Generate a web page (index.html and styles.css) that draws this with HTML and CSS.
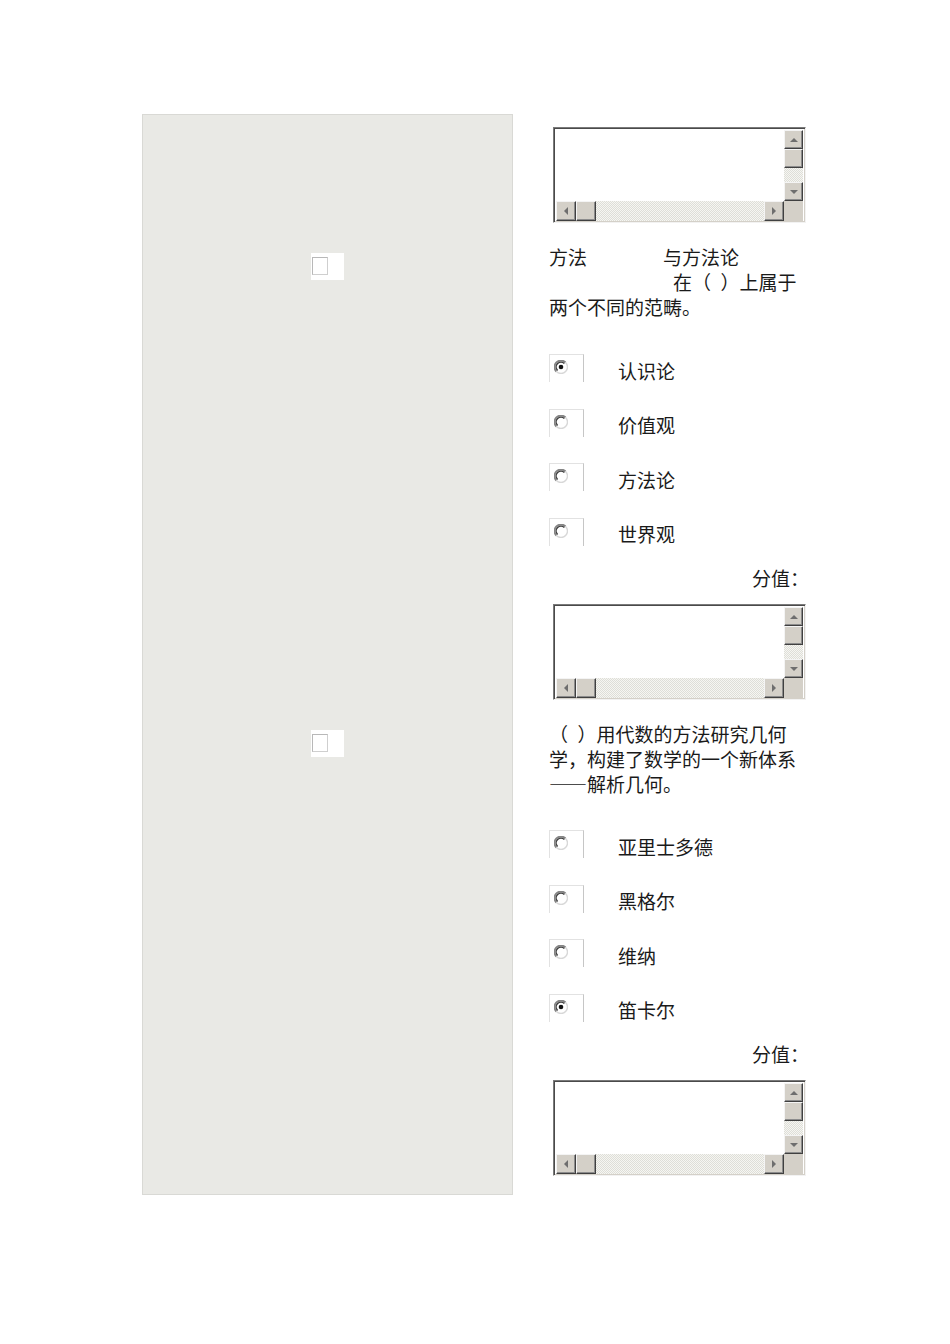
FILE: index.html
```html
<!DOCTYPE html>
<html lang="zh-CN">
<head>
<meta charset="utf-8">
<title>题目</title>
<link rel="stylesheet" href="styles.css">
</head>
<body>
<div class="page">
  <div class="side">
    <div class="check first"><span class="check-inner"></span></div>
    <div class="check second"><span class="check-inner"></span></div>
  </div>
  <div class="main">
    <div class="ta first-ta">
      <div class="ta-body"></div>
      <div class="vbar"><span class="btn up"><i class="arr a-up"></i></span><span class="btn thumb"></span><span class="track"></span><span class="btn down"><i class="arr a-down"></i></span></div>
      <div class="hbar"><span class="btn left"><i class="arr a-left"></i></span><span class="btn thumb"></span><span class="track"></span><span class="btn right"><i class="arr a-right"></i></span></div>
      <div class="corner"></div>
    </div>

    <div class="q">
      <div>方法<span class="gap1"></span>与方法论</div>
      <div><span class="gap2"></span>在（&#8194;）上属于</div>
      <div>两个不同的范畴。</div>
    </div>

    <div class="opts">
      <div class="opt"><span class="rbox"><svg class="radio" viewBox="0 0 14 14" width="14" height="14"><circle cx="7" cy="7" r="6" fill="#fff"/><path d="M2.4 11.6 A6.3 6.3 0 0 1 11.6 2.4" stroke="#858585" stroke-width="1.8" fill="none"/><path d="M11.6 2.4 A6.3 6.3 0 0 1 2.4 11.6" stroke="#d8d8d8" stroke-width="1.4" fill="none"/><path d="M3.6 10.4 A4.7 4.7 0 0 1 10.4 3.6" stroke="#404040" stroke-width="1.4" fill="none"/><circle cx="7" cy="7" r="2.3" fill="#111"/></svg></span><span class="label">认识论</span></div>
      <div class="opt"><span class="rbox"><svg class="radio" viewBox="0 0 14 14" width="14" height="14"><circle cx="7" cy="7" r="6" fill="#fff"/><path d="M2.4 11.6 A6.3 6.3 0 0 1 11.6 2.4" stroke="#858585" stroke-width="1.8" fill="none"/><path d="M11.6 2.4 A6.3 6.3 0 0 1 2.4 11.6" stroke="#d8d8d8" stroke-width="1.4" fill="none"/><path d="M3.6 10.4 A4.7 4.7 0 0 1 10.4 3.6" stroke="#404040" stroke-width="1.4" fill="none"/></svg></span><span class="label">价值观</span></div>
      <div class="opt"><span class="rbox"><svg class="radio" viewBox="0 0 14 14" width="14" height="14"><circle cx="7" cy="7" r="6" fill="#fff"/><path d="M2.4 11.6 A6.3 6.3 0 0 1 11.6 2.4" stroke="#858585" stroke-width="1.8" fill="none"/><path d="M11.6 2.4 A6.3 6.3 0 0 1 2.4 11.6" stroke="#d8d8d8" stroke-width="1.4" fill="none"/><path d="M3.6 10.4 A4.7 4.7 0 0 1 10.4 3.6" stroke="#404040" stroke-width="1.4" fill="none"/></svg></span><span class="label">方法论</span></div>
      <div class="opt"><span class="rbox"><svg class="radio" viewBox="0 0 14 14" width="14" height="14"><circle cx="7" cy="7" r="6" fill="#fff"/><path d="M2.4 11.6 A6.3 6.3 0 0 1 11.6 2.4" stroke="#858585" stroke-width="1.8" fill="none"/><path d="M11.6 2.4 A6.3 6.3 0 0 1 2.4 11.6" stroke="#d8d8d8" stroke-width="1.4" fill="none"/><path d="M3.6 10.4 A4.7 4.7 0 0 1 10.4 3.6" stroke="#404040" stroke-width="1.4" fill="none"/></svg></span><span class="label">世界观</span></div>
    </div>
    <div class="score">分值：</div>

    <div class="ta">
      <div class="ta-body"></div>
      <div class="vbar"><span class="btn up"><i class="arr a-up"></i></span><span class="btn thumb"></span><span class="track"></span><span class="btn down"><i class="arr a-down"></i></span></div>
      <div class="hbar"><span class="btn left"><i class="arr a-left"></i></span><span class="btn thumb"></span><span class="track"></span><span class="btn right"><i class="arr a-right"></i></span></div>
      <div class="corner"></div>
    </div>

    <div class="q q2">
      <div>（&#8194;）用代数的方法研究几何</div>
      <div>学，构建了数学的一个新体系</div>
      <div>——解析几何。</div>
    </div>

    <div class="opts opts2">
      <div class="opt"><span class="rbox"><svg class="radio" viewBox="0 0 14 14" width="14" height="14"><circle cx="7" cy="7" r="6" fill="#fff"/><path d="M2.4 11.6 A6.3 6.3 0 0 1 11.6 2.4" stroke="#858585" stroke-width="1.8" fill="none"/><path d="M11.6 2.4 A6.3 6.3 0 0 1 2.4 11.6" stroke="#d8d8d8" stroke-width="1.4" fill="none"/><path d="M3.6 10.4 A4.7 4.7 0 0 1 10.4 3.6" stroke="#404040" stroke-width="1.4" fill="none"/></svg></span><span class="label">亚里士多德</span></div>
      <div class="opt"><span class="rbox"><svg class="radio" viewBox="0 0 14 14" width="14" height="14"><circle cx="7" cy="7" r="6" fill="#fff"/><path d="M2.4 11.6 A6.3 6.3 0 0 1 11.6 2.4" stroke="#858585" stroke-width="1.8" fill="none"/><path d="M11.6 2.4 A6.3 6.3 0 0 1 2.4 11.6" stroke="#d8d8d8" stroke-width="1.4" fill="none"/><path d="M3.6 10.4 A4.7 4.7 0 0 1 10.4 3.6" stroke="#404040" stroke-width="1.4" fill="none"/></svg></span><span class="label">黑格尔</span></div>
      <div class="opt"><span class="rbox"><svg class="radio" viewBox="0 0 14 14" width="14" height="14"><circle cx="7" cy="7" r="6" fill="#fff"/><path d="M2.4 11.6 A6.3 6.3 0 0 1 11.6 2.4" stroke="#858585" stroke-width="1.8" fill="none"/><path d="M11.6 2.4 A6.3 6.3 0 0 1 2.4 11.6" stroke="#d8d8d8" stroke-width="1.4" fill="none"/><path d="M3.6 10.4 A4.7 4.7 0 0 1 10.4 3.6" stroke="#404040" stroke-width="1.4" fill="none"/></svg></span><span class="label">维纳</span></div>
      <div class="opt"><span class="rbox"><svg class="radio" viewBox="0 0 14 14" width="14" height="14"><circle cx="7" cy="7" r="6" fill="#fff"/><path d="M2.4 11.6 A6.3 6.3 0 0 1 11.6 2.4" stroke="#858585" stroke-width="1.8" fill="none"/><path d="M11.6 2.4 A6.3 6.3 0 0 1 2.4 11.6" stroke="#d8d8d8" stroke-width="1.4" fill="none"/><path d="M3.6 10.4 A4.7 4.7 0 0 1 10.4 3.6" stroke="#404040" stroke-width="1.4" fill="none"/><circle cx="7" cy="7" r="2.3" fill="#111"/></svg></span><span class="label">笛卡尔</span></div>
    </div>
    <div class="score">分值：</div>

    <div class="ta">
      <div class="ta-body"></div>
      <div class="vbar"><span class="btn up"><i class="arr a-up"></i></span><span class="btn thumb"></span><span class="track"></span><span class="btn down"><i class="arr a-down"></i></span></div>
      <div class="hbar"><span class="btn left"><i class="arr a-left"></i></span><span class="btn thumb"></span><span class="track"></span><span class="btn right"><i class="arr a-right"></i></span></div>
      <div class="corner"></div>
    </div>
  </div>
</div>
</body>
</html>
```

FILE: styles.css
```css
html, body {
  margin: 0;
  padding: 0;
  background: #fff;
}
body {
  font-family: "Noto Sans CJK SC", "Liberation Serif", sans-serif;
  color: #1a1a1a;
  text-spacing-trim: space-all;
  font-feature-settings: "chws" 0, "halt" 0, "palt" 0;
}
.page {
  display: flex;
  align-items: flex-start;
  padding: 114px 0 0 142px;
  gap: 36px;
}
.side {
  width: 371px;
  height: 1081px;
  box-sizing: border-box;
  background: #e9e9e5;
  border: 1px solid #d9d9d5;
  padding-left: 168px;
  display: flex;
  flex-direction: column;
}
.check {
  width: 33px;
  height: 27px;
  background: #fff;
  box-sizing: border-box;
  padding: 4px 0 0 1px;
}
.check.first { margin-top: 138px; }
.check.second { margin-top: 450px; }
.check-inner {
  display: block;
  width: 16px;
  height: 18px;
  box-sizing: border-box;
  border: 1px solid #b8b8b8;
  border-right-color: #cfcfcf;
  border-bottom-color: #cfcfcf;
}
.main {
  width: 260px;
  display: flex;
  flex-direction: column;
}
.ta {
  margin-left: 4px;
  width: 253px;
  height: 96px;
  box-sizing: border-box;
  border: 1px solid;
  border-color: #7a7a7a #f2f2f2 #f2f2f2 #7a7a7a;
  box-shadow: inset 1px 1px 0 #4a4a4a, inset -1px -1px 0 #d4d0c8;
  padding: 2px 2px 1px 2px;
  background: #fff;
  display: grid;
  grid-template-columns: 1fr 19px;
  grid-template-rows: 1fr 20px;
}
.first-ta { margin-top: 13px; }
.ta-body { background: #fff; }
.vbar {
  display: flex;
  flex-direction: column;
}
.hbar {
  display: flex;
}
.corner {
  background: #d4d0c8;
}
.btn {
  display: flex;
  align-items: center;
  justify-content: center;
  box-sizing: border-box;
  background: #d4d0c8;
  border: 1px solid;
  border-color: #f4f4f4 #404040 #404040 #f4f4f4;
  box-shadow: inset -1px -1px 0 #8c8c8c;
}
.vbar .btn { width: 19px; height: 19px; flex: none; }
.hbar .btn { width: 20px; height: 20px; flex: none; }
.track {
  flex: 1;
  background: repeating-conic-gradient(#f6f6f2 0 25%, #deded8 0 50%) 0 0 / 2px 2px;
}
.arr {
  display: block;
  width: 0;
  height: 0;
  border-style: solid;
  border-color: transparent;
}
.a-up { border-width: 0 4px 4px 4px; border-bottom-color: #6e6e6e; }
.a-down { border-width: 4px 4px 0 4px; border-top-color: #6e6e6e; }
.a-left { border-width: 4px 4px 4px 0; border-right-color: #6e6e6e; }
.a-right { border-width: 4px 0 4px 4px; border-left-color: #6e6e6e; }

.q {
  margin-top: 21px;
  font-size: 19px;
  line-height: 25px;
  white-space: nowrap;
}
.q.q2 { margin-top: 21px; }
.gap1 { display: inline-block; width: 76px; }
.gap2 { display: inline-block; width: 124px; }

.opts {
  margin-top: 24px;
  display: flex;
  flex-direction: column;
}
.opts.opts2 { margin-top: 23px; }
.opt {
  height: 54.5px;
  display: flex;
  align-items: center;
}
.rbox {
  width: 35px;
  height: 28px;
  box-sizing: border-box;
  border-top: 1px solid #e2e2e2;
  border-left: 1px solid #e2e2e2;
  border-right: 1px solid #c6c6c6;
  background: #fff;
  margin-top: -4px;
  padding: 5px 0 0 4px;
}
.radio { display: block; }
.label {
  margin-left: 34px;
  font-size: 19px;
  line-height: 25px;
}
.score {
  margin-top: 4px;
  text-align: right;
  font-size: 19px;
  line-height: 25px;
  margin-bottom: 14px;
}
```
